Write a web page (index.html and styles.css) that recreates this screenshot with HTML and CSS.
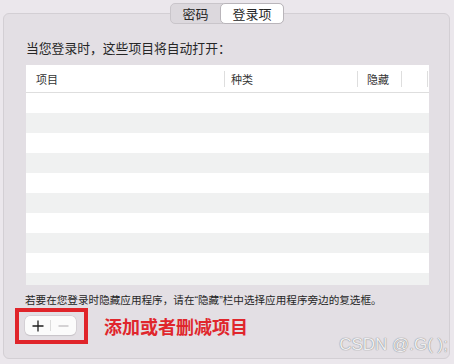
FILE: index.html
```html
<!DOCTYPE html>
<html lang="zh-CN">
<head>
  <meta charset="UTF-8">
  <title>登录项</title>
  <link rel="stylesheet" href="styles.css">
</head>
<body>
  <div class="tabs">
    <div class="tab">密码</div>
    <div class="tab active">登录项</div>
  </div>
  <div class="panel">
    <p class="intro">当您登录时，这些项目将自动打开：</p>
    <div class="table">
      <div class="thead">
        <div class="th col-name">项目</div>
        <div class="th col-kind">种类</div>
        <div class="th col-hide">隐藏</div>
        <div class="th col-rest"></div>
      </div>
      <div class="tbody">
        <div class="row"></div>
        <div class="row"></div>
        <div class="row"></div>
        <div class="row"></div>
        <div class="row"></div>
        <div class="row"></div>
        <div class="row"></div>
        <div class="row"></div>
        <div class="row"></div>
        <div class="row"></div>
      </div>
    </div>
    <p class="hint">若要在您登录时隐藏应用程序，请在“隐藏”栏中选择应用程序旁边的复选框。</p>
    <div class="actions">
      <div class="mark">
        <div class="buttons">
          <span class="btn">
            <svg width="12" height="12" viewBox="0 0 12 12"><path d="M6 0.5v11M0.5 6h11" stroke="#1e1e1e" stroke-width="1.3"/></svg>
          </span>
          <span class="sep"></span>
          <span class="btn">
            <svg width="11" height="12" viewBox="0 0 11 12"><path d="M0.5 6h10" stroke="#b4b1b5" stroke-width="1.1"/></svg>
          </span>
        </div>
      </div>
      <span class="note">添加或者删减项目</span>
    </div>
  </div>
  <div class="watermark">CSDN @.G( );</div>
</body>
</html>
```

FILE: styles.css
```css
body {
  margin: 0;
  width: 454px;
  height: 364px;
  background-color: #ebe7ec;
  font-family: "Noto Sans CJK SC", "Noto Sans", sans-serif;
  color: #262626;
  position: relative;
  overflow: hidden;
}

.tabs {
  position: relative;
  z-index: 1;
  display: flex;
  width: 112px;
  height: 19px;
  margin: 3px auto 0;
  background-color: #dcd8dd;
  border: 1px solid #c9c5ca;
  border-radius: 5px;
}

.tab {
  display: flex;
  align-items: center;
  justify-content: center;
  width: 50px;
  font-size: 13px;
  line-height: 19px;
}

.tab.active {
  width: 63px;
  margin: -1px -1px -1px 0;
  background-color: #fff;
  border: 1px solid #b9b5ba;
  border-radius: 5px;
}

.panel {
  position: relative;
  margin: -11px 4px 0 3px;
  height: 344px;
  background-color: #e3dfe4;
  border: 1px solid #d3cfd4;
  border-radius: 6px;
  padding: 0 20px 0 22px;
}

.intro {
  margin: 25px 0 0;
  font-size: 12.8px;
  line-height: 18px;
}

.table {
  margin-top: 8px;
  width: 403px;
  height: 220px;
  background-color: #fff;
  overflow: hidden;
}

.thead {
  display: flex;
  align-items: center;
  height: 27px;
  border-bottom: 1px solid #dedede;
  font-size: 11px;
  color: #333;
}

.th {
  height: 16px;
  line-height: 16px;
  border-right: 1px solid #dedede;
}

.col-name {
  width: 188px;
  padding-left: 10px;
}

.col-kind {
  width: 126px;
  padding-left: 6px;
}

.col-hide {
  width: 34px;
  padding-left: 9px;
}

.col-rest {
  width: 25px;
}

.row {
  height: 20px;
}

.row:nth-child(even) {
  background-color: #f0f1f1;
}

.hint {
  margin: 7px 0 0 -1px;
  font-family: "Liberation Sans", "Noto Sans CJK SC", sans-serif;
  font-size: 10.6px;
  line-height: 16px;
  white-space: nowrap;
}

.actions {
  display: flex;
  align-items: center;
  margin: 0 0 0 -11px;
}

.mark {
  border: 4px solid #e0242a;
  padding: 4px 8px 5px 6px;
}

.buttons {
  display: flex;
  align-items: center;
  width: 51px;
  height: 19px;
  background-color: #fbfbfb;
  border-radius: 5px;
  box-shadow: 0 0 0 0.5px #c8c4c9, 0 1px 1px rgba(0, 0, 0, 0.12);
}

.btn {
  flex: 1;
  display: flex;
  align-items: center;
  justify-content: center;
}

.sep {
  width: 1px;
  height: 11px;
  background-color: #dcdcdc;
}

.note {
  margin-left: 16px;
  font-size: 18px;
  font-weight: bold;
  color: #e0262c;
}

.watermark {
  position: absolute;
  right: 6px;
  bottom: 9px;
  font-family: "Liberation Sans", Arial, sans-serif;
  font-size: 17px;
  color: #eeeef0;
  text-shadow: 0 0 1px #8e8e90, 0 0 1px #8e8e90;
}
```
